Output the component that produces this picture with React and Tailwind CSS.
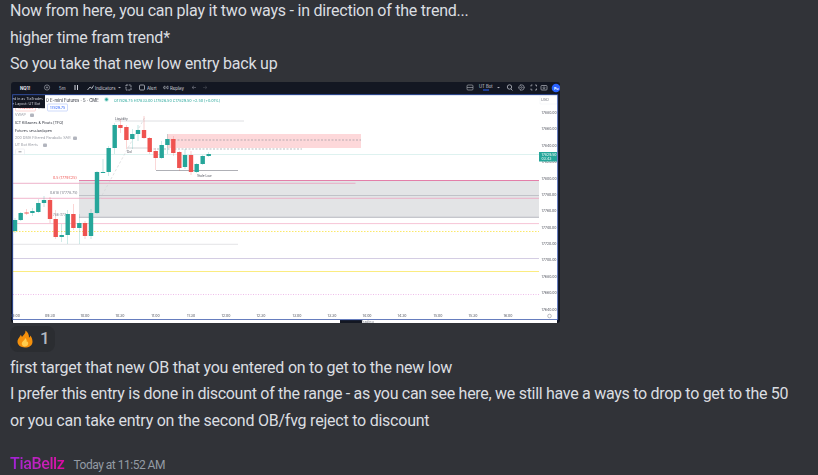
const UP = "#26a69a";
const DOWN = "#ef5350";

// [x, open top, body bottom, wick top, wick bottom, color]
const candles = [
  [15, 219, 230, 217, 232, UP],
  [20.7, 212, 219, 211, 220, UP],
  [26.6, 211.5, 212.5, 208, 214, DOWN],
  [32.4, 210, 212, 207, 215, UP],
  [38.3, 202, 211, 198, 212, UP],
  [44, 199, 202, 195, 206, UP],
  [50, 199, 218, 196, 222, DOWN],
  [55.7, 218, 236, 209, 238, DOWN],
  [61.7, 234, 236, 223, 241, UP],
  [67.7, 213, 234, 209, 243, UP],
  [73.4, 213, 227, 203, 229, DOWN],
  [79.3, 222, 227, 213, 243, UP],
  [85, 222, 235, 220, 238, DOWN],
  [91, 212, 235, 208, 238, UP],
  [97, 171, 212, 170, 213, UP],
  [103, 171, 172, 158, 172, UP],
  [108.7, 147, 171, 145, 175, UP],
  [114.7, 124, 147, 122, 153, UP],
  [120.4, 124, 127, 118, 132, DOWN],
  [126.4, 126, 139, 124, 148, DOWN],
  [132.3, 133, 138, 128, 148, UP],
  [138, 129, 133, 124, 140, UP],
  [144, 129, 137, 115, 138, DOWN],
  [149.7, 137, 151, 136, 153, DOWN],
  [155.7, 150, 157, 147, 169, DOWN],
  [161.7, 144, 157, 140, 158, UP],
  [167.4, 138, 144, 133, 153, UP],
  [173.3, 138, 152, 135, 155, DOWN],
  [179.3, 151, 167, 150, 170, DOWN],
  [185, 154, 166, 148, 168, UP],
  [191, 154, 171, 150, 174, DOWN],
  [196.7, 163, 171, 162, 172, UP],
  [202.7, 155, 163, 154, 164, UP],
  [208.7, 153, 155, 151, 156, UP],
];

const prices = [
  ["17880.00", 112], ["17860.00", 128], ["17840.00", 144.5], ["17820.00", 161],
  ["17800.00", 177.5], ["17780.00", 194], ["17760.00", 210], ["17740.00", 226.5],
  ["17720.00", 243], ["17700.00", 259], ["17680.00", 275.5], ["17660.00", 292], ["17640.00", 308.5],
];

const times = [
  ["09:00", 15], ["09:30", 50], ["10:00", 85], ["10:30", 120], ["11:00", 155.5],
  ["11:30", 191], ["12:00", 226], ["12:30", 261], ["13:00", 297], ["13:30", 332],
  ["14:00", 367], ["14:30", 402], ["15:00", 438], ["15:30", 473], ["16:00", 508],
];

const legend = [
  ["VWAP", 115, "#9598a1"],
  ["ICT Killzones & Pivots [TFO]", 123, "#2a2e39"],
  ["Futures session/open", 130.5, "#2a2e39"],
  ["200 DMA Filtered Parabolic SAR", 138, "#9598a1"],
  ["UT Bot Alerts", 145, "#9598a1"],
];

const TopBar = () => (
  <g fontFamily="Inter, sans-serif" fill="#d1d4dc" fontSize="4.4">
    <rect x="11" y="81" width="549" height="13" fill="#131722" />
    <text x="20" y="88.5" fontWeight="700" fill="#e6e8ee">NQ1!</text>
    <circle cx="47" cy="86.5" r="2.6" fill="none" stroke="#b2b5be" strokeWidth="0.6" />
    <path d="M45.8 86.5h2.4M47 85.3v2.4" stroke="#b2b5be" strokeWidth="0.5" />
    <text x="59" y="88.5">5m</text>
    <path d="M75 84v5M77.5 84v5" stroke="#d1d4dc" strokeWidth="1" />
    <path d="M87.5 89l2.5-3 2 1.5 1.5-3" fill="none" stroke="#d1d4dc" strokeWidth="0.8" />
    <text x="95" y="88.5">Indicators</text>
    <path d="M118 86h3l-1.5 1.3z" fill="#b2b5be" />
    <rect x="126" y="84" width="5" height="5" fill="none" stroke="#d1d4dc" strokeWidth="0.7" strokeDasharray="2 0.7" />
    <rect x="139.5" y="84" width="5" height="5" rx="1" fill="none" stroke="#d1d4dc" strokeWidth="0.7" />
    <text x="147" y="88.5">Alert</text>
    <path d="M163 86.5l2-1.6v3.2zM166 86.5l2-1.6v3.2z" fill="none" stroke="#d1d4dc" strokeWidth="0.5" />
    <text x="170" y="88.5">Replay</text>
    <path d="M192 86.5l2-1.7M192 86.5l2 1.5M192 86.5h4" stroke="#787b86" strokeWidth="0.6" />
    <path d="M207 86.5l-2-1.7M207 86.5l-2 1.5M207 86.5h-4" stroke="#434651" strokeWidth="0.6" />
    <rect x="467" y="84" width="6" height="5" rx="1" fill="none" stroke="#b2b5be" strokeWidth="0.6" />
    <path d="M467 86.5h6" stroke="#b2b5be" strokeWidth="0.6" />
    <text x="479" y="87" fontSize="4.2">UT Bot</text>
    <path d="M483 89h6" stroke="#2962ff" strokeWidth="1" />
    <path d="M497 86h3l-1.5 1.3z" fill="#b2b5be" />
    <circle cx="509.5" cy="86" r="2.2" fill="none" stroke="#d1d4dc" strokeWidth="0.7" />
    <path d="M511 88l1.5 1.5" stroke="#d1d4dc" strokeWidth="0.7" />
    <circle cx="521.5" cy="86.5" r="2.6" fill="none" stroke="#d1d4dc" strokeWidth="1" strokeDasharray="1 0.5" />
    <circle cx="521.5" cy="86.5" r="0.8" fill="none" stroke="#d1d4dc" strokeWidth="0.5" />
    <path d="M531 85.5V84h1.5M535 84h1.5v1.5M536.5 87.5V89H535M532.5 89H531v-1.5" fill="none" stroke="#d1d4dc" strokeWidth="0.6" />
    <rect x="541" y="84.5" width="6" height="4.5" rx="0.8" fill="none" stroke="#d1d4dc" strokeWidth="0.6" />
    <circle cx="544" cy="86.8" r="1" fill="none" stroke="#d1d4dc" strokeWidth="0.5" />
    <circle cx="556" cy="87" r="4.3" fill="#2962ff" />
    <text x="554" y="88.5" fontSize="3.6" fill="#fff" fontWeight="700">Pu</text>
  </g>
);

const Levels = () => (
  <g>
    <rect x="79" y="180" width="460" height="36" fill="#e3e4e6" />
    <path d="M79 216.3h460" stroke="#a3a6af" strokeWidth="0.8" />
    <path d="M79 179.5h460" stroke="#e0709f" strokeWidth="0.9" />
    <path d="M13 182.3h342.500" stroke="#e8a0bc" strokeWidth="0.8" />
    <path d="M79 194.500h460" stroke="#c0c2c8" strokeWidth="1" />
    <path d="M13 197.300h526" stroke="#eea5c0" strokeWidth="0.8" />
    <path d="M13 222.600h526" stroke="#f4b5cb" strokeWidth="0.8" />
    <path d="M13 230.500h526" stroke="#fbe96a" strokeWidth="1" strokeDasharray="1.5 1.5" />
    <path d="M13 243.300h225" stroke="#dcdde0" strokeWidth="0.8" />
    <path d="M13 257.500h526" stroke="#c9c0dc" strokeWidth="0.8" />
    <path d="M13 270.500h526" stroke="#fbec80" strokeWidth="1" />
    <path d="M13 293.500h526" stroke="#efbdea" strokeWidth="1" strokeDasharray="1 1.5" />
    <rect x="167" y="133" width="194" height="14" fill="#fdd8da" />
    <path d="M167 139h194" stroke="#8b8d94" strokeWidth="0.6" strokeDasharray="2 1.5" />
    <path d="M150 148h152" stroke="#8b8d94" strokeWidth="0.6" strokeDasharray="2 1.5" />
    <path d="M13 153.500h526" stroke="#d5efec" strokeWidth="0.8" />
    <path d="M115 120h129" stroke="#d6d7da" strokeWidth="0.8" />
    <path d="M127 147h23" stroke="#c9cace" strokeWidth="0.8" />
    <path d="M156 169.500h82" stroke="#9a9ca3" strokeWidth="0.8" />
    <path d="M100 198L145 116" stroke="#d5d6d9" strokeWidth="0.7" strokeDasharray="2.5 2" />
  </g>
);

const ChartText = () => (
  <g fontFamily="Inter, sans-serif" fontSize="3.6">
    <text x="46" y="100.500" fill="#2a2e39" fontSize="4.300">0 E-mini Futures · 5 · CME</text>
    <circle cx="106.500" cy="98.500" r="2.2" fill="#b8e6df" />
    <circle cx="106.500" cy="98.500" r="1.2" fill={UP} />
    <text x="114" y="100.500" fill={UP} fontSize="3.750">O17826.75 H17833.00 L17826.50 C17829.50 +2.50 (+0.01%)</text>
    <rect x="15.500" y="103" width="20" height="7" rx="1" fill="#fff" stroke="#f7a8a6" strokeWidth="0.5" />
    <text x="18" y="108" fill={DOWN}>17829.25</text>
    <text x="38" y="108" fill="#787b86" fontSize="3.400">0.50</text>
    <rect x="47.500" y="103" width="20" height="7" rx="1" fill="#fff" stroke="#9db4f7" strokeWidth="0.5" />
    <text x="50" y="108" fill="#2962ff">17829.75</text>
    {legend.map(([label, y, color]) => (
      <text key={label} x="15" y={y} fill={color} fontSize="3.650">{label}</text>
    ))}
    <rect x="30" y="112.500" width="4" height="3.500" rx="1" fill="#b2b5be" />
    <rect x="73" y="135.500" width="4" height="3.500" rx="1" fill="#b2b5be" />
    <rect x="43" y="142.500" width="4" height="3.500" rx="1" fill="#b2b5be" />
    <rect x="15.500" y="148" width="9" height="5.500" rx="1" fill="#fff" stroke="#e0e3eb" strokeWidth="0.5" />
    <path d="M18.500 150.800h3" stroke="#50535e" strokeWidth="0.6" />
    <text x="115" y="118.500" fill="#50535e" fontSize="3.200">Liquidity</text>
    <text x="127" y="151.500" fill="#50535e" fontSize="3.200">Dol</text>
    <text x="197" y="175.500" fill="#50535e" fontSize="3.200">Stale Low</text>
    <text x="53" y="177.500" fill={DOWN} fontSize="3.600">0.5 (17797.25)</text>
    <text x="50" y="193" fill="#787b86" fontSize="3.600">0.618 (17778.75)</text>
    <text x="53" y="215" fill="#787b86" fontSize="3.200">786 (177</text>

    <rect x="540" y="95" width="17" height="8" fill="#fff" stroke="#eceef2" strokeWidth="0.4" />
    <text x="541" y="100" fill="#787b86" fontSize="3.800">USD</text>
    {prices.map(([label, y]) => (
      <text key={label} x="541.500" y={y + 1.300} fill="#50535e" fontSize="3.500">{label}</text>
    ))}
    <rect x="539" y="151" width="18" height="9.500" fill={UP} />
    <text x="541.500" y="155" fill="#fff" fontSize="3.500">17829.50</text>
    <text x="541.500" y="159" fill="#fff" fontSize="3.500">03:43</text>
    {times.map(([label, x]) => (
      <text key={label} x={x} y="316.300" fill="#50535e" fontSize="3.500" textAnchor="middle">{label}</text>
    ))}
    <circle cx="549.500" cy="315" r="1.800" fill="none" stroke="#787b86" strokeWidth="0.5" />
  </g>
);

const ChartShot = () => (
  <svg viewBox="11 81 549 241" className="block w-[549px] h-[241px] rounded-[3px] blur-[0.4px]">
    <TopBar />
    <rect x="11" y="94" width="549" height="228" fill="#131722" />
    <rect x="13" y="94" width="545" height="225" fill="#fff" />
    <Levels />
    {candles.map(([x, top, bottom, wickTop, wickBottom, color]) => (
      <g key={x}>
        <path d={`M${x} ${wickTop}V${wickBottom}`} stroke={color} strokeWidth="0.6" opacity="0.45" />
        <rect x={x - 2.2} y={top} width="4.400" height={bottom - top} fill={color} />
      </g>
    ))}
    <ChartText />
    {/* tooltip over the legend */}
    <rect x="11" y="93" width="34" height="14" fill="#131722" />
    <text x="12" y="98.500" fill="#d1d4dc" fontSize="3.600" fontFamily="Inter, sans-serif">ed in as TiaTrades</text>
    <text x="12" y="104" fill="#d1d4dc" fontSize="3.600" fontFamily="Inter, sans-serif">e Layout: UT Bot</text>
    {/* frame of the chart window */}
    <rect x="12.700" y="93.700" width="545" height="225" fill="none" stroke="#3352a8" strokeWidth="0.9" />
    <rect x="13" y="319" width="327" height="3" fill="#fff" />
    <rect x="362" y="319" width="195" height="3" fill="#fff" />
    <text x="361" y="322" fill="#787b86" fontSize="3.500" fontFamily="Inter, sans-serif">Trading</text>
  </svg>
);

const Flame = () => (
  <svg viewBox="0 0 16 18" className="w-4 h-[18px]">
    <path d="M8.300 0.500C9 3.500 6.500 4.800 5 7 4.600 6 4.300 5.300 3.600 4.700 3.600 6.500 0.500 8.300 0.500 11.800 0.500 15.300 3.800 17.500 8 17.500s7.500-2.200 7.500-5.800C15.500 9 14.300 6.800 13.500 5.500 13.300 6.500 12.800 7.200 12 7.700 12.200 4.800 10.800 1.800 8.300 0.500z" fill="#f4900c" />
    <path d="M8 8C8.300 10 6 10.500 5 12.500 4.200 14.300 5.800 16.500 8 16.500s3.800-2 3-4.200C10.500 11 10.300 11.800 9.800 12 10 10.500 9.400 9 8 8z" fill="#ffcc4d" />
  </svg>
);

const Line = ({ className = "tracking-[-0.23px]", children }) => (
  <p className={`h-[26.500px] leading-[26.500px] whitespace-nowrap ${className}`}>{children}</p>
);

export default function App() {
  return (
    <div
      className="w-[818px] h-[475px] overflow-hidden bg-[#313338] text-[#dbdee1] text-[16px] pl-[10px]"
      style={{ fontFamily: 'Roboto, sans-serif' }}
    >
      <Line className="-mt-[2px] tracking-[-0.23px]">Now from here, you can play it two ways - in direction of the trend...</Line>
      <Line>higher time fram trend*</Line>
      <Line>So you take that new low entry back up</Line>
      <div className="mt-[4px] ml-px">
        <ChartShot />
      </div>
      <div className="mt-[3px] w-[45px] h-[26px] rounded-[8px] bg-[#2b2d31] flex items-center gap-[7px] pl-[7px]">
        <Flame />
        <span className="text-[#b5bac1] text-[17px] font-medium">1</span>
      </div>
      <Line className="mt-[3px] tracking-[-0.23px]">first target that new OB that you entered on to get to the new low</Line>
      <Line className="tracking-[-0.29px]">I prefer this entry is done in discount of the range - as you can see here, we still have a ways to drop to get to the 50</Line>
      <Line>or you can take entry on the second OB/fvg reject to discount</Line>
      <div className="mt-[18px] flex items-baseline gap-[9px]">
        <span className="text-[16px] font-medium tracking-[-0.35px] bg-gradient-to-r from-[#a020d8] to-[#e000a0] bg-clip-text text-transparent">TiaBellz</span>
        <span className="text-[12px] tracking-[-0.5px] text-[#949ba4]">Today at 11:52 AM</span>
      </div>
    </div>
  );
}
